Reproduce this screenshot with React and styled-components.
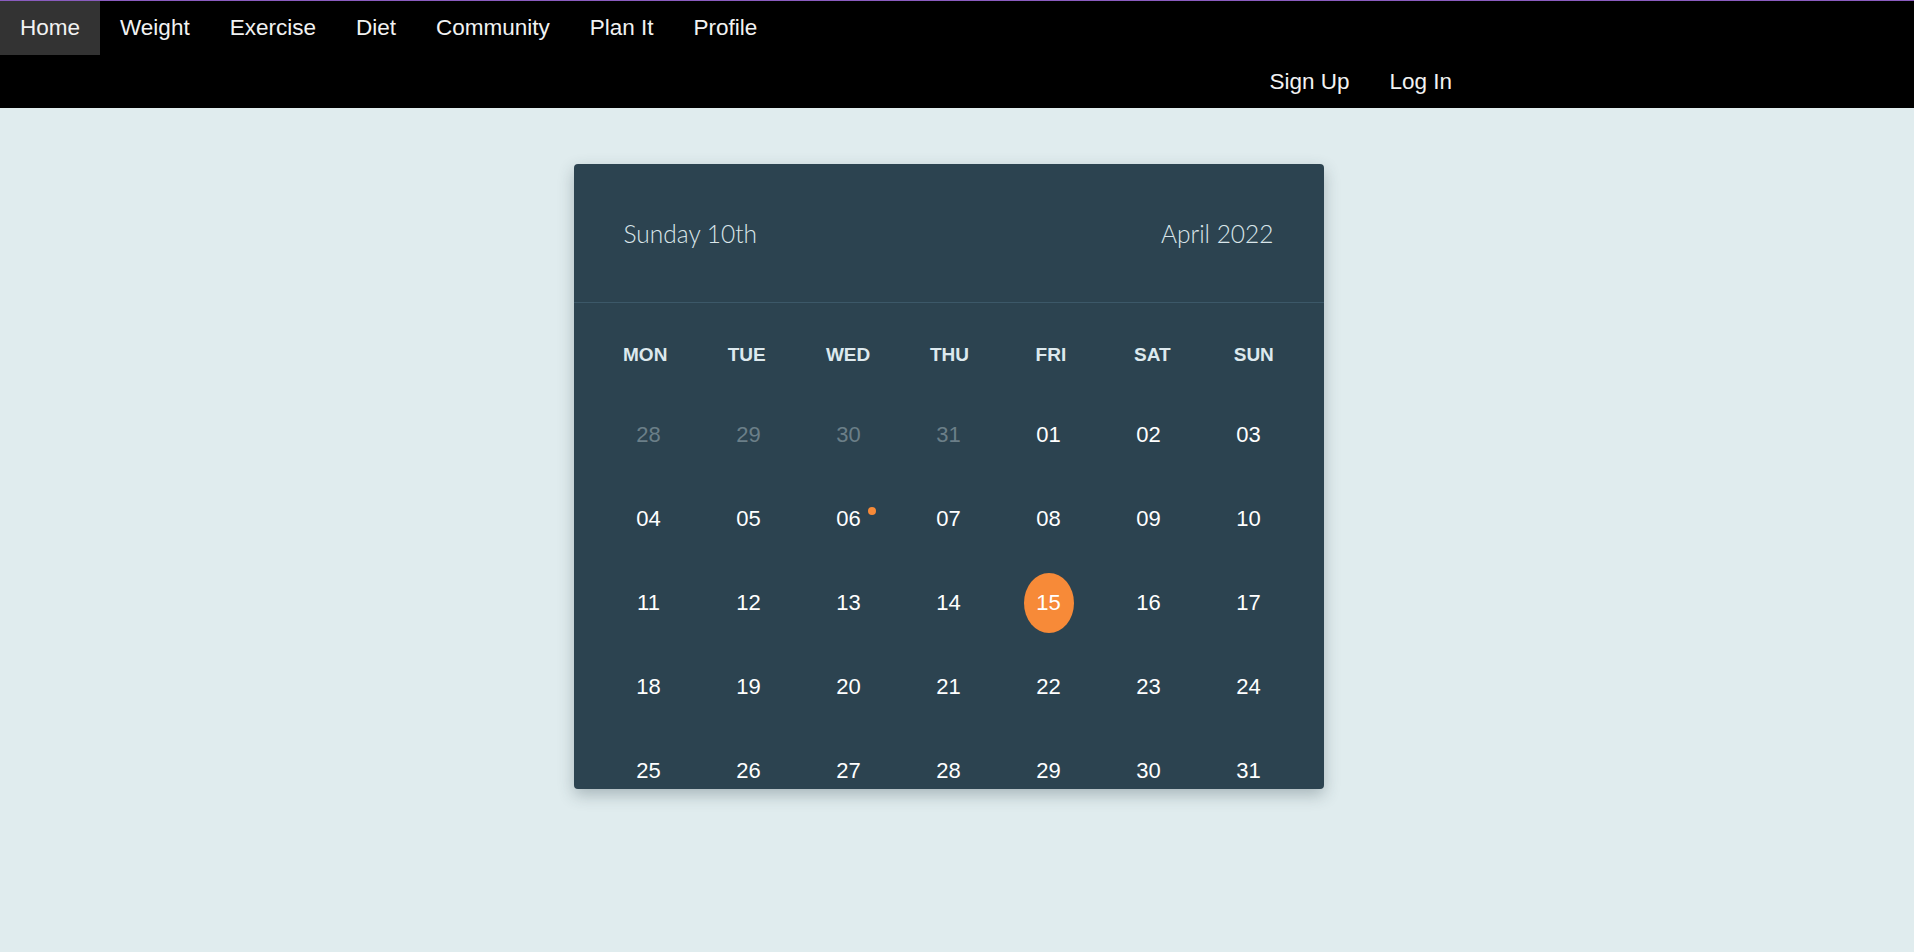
import React from "react";
import styled, { createGlobalStyle } from "styled-components";

const GlobalStyle = createGlobalStyle`
  html, body {
    margin: 0;
    padding: 0;
  }
  body {
    background: #e0ecee;
    font-family: "Liberation Sans", Arial, sans-serif;
  }
`;

const mainLinks = ["Home", "Weight", "Exercise", "Diet", "Community", "Plan It", "Profile"];
const accountLinks = ["Sign Up", "Log In"];
const weekDays = ["MON", "TUE", "WED", "THU", "FRI", "SAT", "SUN"];

const buildDays = () => {
  const days = [28, 29, 30, 31].map((n) => ({ label: String(n), faded: true }));
  for (let i = 1; i <= 31; i++) {
    days.push({
      label: String(i).padStart(2, "0"),
      selected: i === 15,
      event: i === 6,
    });
  }
  return days;
};

const App = () => {
  const days = buildDays();
  return (
    <>
      <GlobalStyle />
      <TopNav>
        <NavRow>
          {mainLinks.map((name) => (
            <NavLink key={name} active={name === "Home"}>
              {name}
            </NavLink>
          ))}
        </NavRow>
        <AccountRow>
          {accountLinks.map((name) => (
            <NavLink key={name}>{name}</NavLink>
          ))}
        </AccountRow>
      </TopNav>
      <Main>
        <Calendar>
          <CalendarHeader>
            <HeaderText>Sunday 10th</HeaderText>
            <HeaderText>April 2022</HeaderText>
          </CalendarHeader>
          <CalendarBody>
            <WeekRow>
              {weekDays.map((d) => (
                <WeekDay key={d}>{d}</WeekDay>
              ))}
            </WeekRow>
            <DaysGrid>
              {days.map((d, i) => (
                <DayCell key={i}>
                  <DayNumber faded={d.faded} selected={d.selected}>
                    {d.label}
                    {d.event && <EventDot />}
                  </DayNumber>
                </DayCell>
              ))}
            </DaysGrid>
          </CalendarBody>
        </Calendar>
      </Main>
    </>
  );
};

const TopNav = styled.nav`
  background: #000;
  border-top: 1px solid #8a5cbf;
  height: 107px;
  padding-right: 17px;
`;

const NavRow = styled.div`
  display: flex;
  height: 54px;
`;

const AccountRow = styled(NavRow)`
  justify-content: flex-end;
  padding-right: 425px;
`;

const NavLink = styled.a`
  display: flex;
  align-items: center;
  padding: 0 20px;
  height: 54px;
  font-size: 22.5px;
  color: #f2f2f2;
  text-decoration: none;
  cursor: pointer;
  background: ${(p) => (p.active ? "#333" : "transparent")};
`;

const Main = styled.main`
  display: flex;
  justify-content: center;
  padding-top: 56px;
  padding-right: 17px;
  min-height: 1306px;
`;

const Calendar = styled.div`
  width: 750px;
  height: 625px;
  background: #2c4350;
  border-radius: 4px;
  overflow: hidden;
  box-shadow: 0 6px 16px rgba(40, 60, 70, 0.3);
  align-self: flex-start;
`;

const CalendarHeader = styled.div`
  display: flex;
  justify-content: space-between;
  align-items: center;
  height: 138px;
  padding: 0 50px;
  border-bottom: 1px solid #3c5868;
`;

const HeaderText = styled.span`
  font-family: Lato, "Open Sans", sans-serif;
  font-weight: 300;
  font-size: 24.5px;
  color: #dae6ea;
`;

const CalendarBody = styled.div`
  padding: 13px 25px 0;
`;

const WeekRow = styled.div`
  display: grid;
  grid-template-columns: repeat(7, 1fr);
  margin: 0 -6px 0 -4px;
  height: 77px;
  align-items: center;
`;

const WeekDay = styled.div`
  text-align: center;
  font-weight: 700;
  font-size: 19px;
  color: #dde9ee;
`;

const DaysGrid = styled.div`
  display: grid;
  grid-template-columns: repeat(7, 100px);
  grid-auto-rows: 84px;
`;

const DayCell = styled.div`
  display: flex;
  align-items: center;
  justify-content: center;
`;

const DayNumber = styled.div`
  position: relative;
  display: flex;
  align-items: center;
  justify-content: center;
  width: 50px;
  height: 60px;
  border-radius: 50%;
  font-size: 22px;
  color: ${(p) => (p.faded ? "#6b7f88" : "#fff")};
  background: ${(p) => (p.selected ? "#f78a38" : "transparent")};
`;

const EventDot = styled.span`
  position: absolute;
  top: 18px;
  right: -2px;
  width: 8px;
  height: 8px;
  border-radius: 50%;
  background: #f78a38;
`;

export default App;
